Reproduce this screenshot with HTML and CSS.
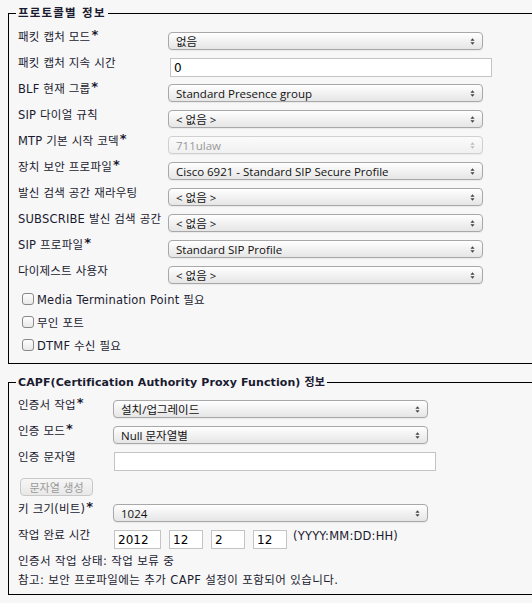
FILE: index.html
```html
<!DOCTYPE html>
<html lang="ko">
<head>
    <meta charset="UTF-8">
    <title>전화 구성</title>
    <link rel="stylesheet" href="styles.css">
</head>
<body>
    <fieldset class="group protocol">
        <legend>프로토콜별 정보</legend>

        <div class="row">
            <label>패킷 캡처 모드<b>*</b></label>
            <div class="select"><span>없음</span><svg class="arrows" viewBox="0 0 6 10"><path d="M3 1L5.5 4H0.5Z M3 9L5.5 6H0.5Z"/></svg></div>
        </div>
        <div class="row">
            <label>패킷 캡처 지속 시간</label>
            <input class="text wide" type="text" value="0">
        </div>
        <div class="row">
            <label>BLF 현재 그룹<b>*</b></label>
            <div class="select"><span>Standard Presence group</span><svg class="arrows" viewBox="0 0 6 10"><path d="M3 1L5.5 4H0.5Z M3 9L5.5 6H0.5Z"/></svg></div>
        </div>
        <div class="row">
            <label>SIP 다이얼 규칙</label>
            <div class="select"><span>&lt; 없음 &gt;</span><svg class="arrows" viewBox="0 0 6 10"><path d="M3 1L5.5 4H0.5Z M3 9L5.5 6H0.5Z"/></svg></div>
        </div>
        <div class="row">
            <label>MTP 기본 시작 코덱<b>*</b></label>
            <div class="select disabled"><span>711ulaw</span><svg class="arrows" viewBox="0 0 6 10"><path d="M3 1L5.5 4H0.5Z M3 9L5.5 6H0.5Z"/></svg></div>
        </div>
        <div class="row">
            <label>장치 보안 프로파일<b>*</b></label>
            <div class="select"><span>Cisco 6921 - Standard SIP Secure Profile</span><svg class="arrows" viewBox="0 0 6 10"><path d="M3 1L5.5 4H0.5Z M3 9L5.5 6H0.5Z"/></svg></div>
        </div>
        <div class="row">
            <label>발신 검색 공간 재라우팅</label>
            <div class="select"><span>&lt; 없음 &gt;</span><svg class="arrows" viewBox="0 0 6 10"><path d="M3 1L5.5 4H0.5Z M3 9L5.5 6H0.5Z"/></svg></div>
        </div>
        <div class="row">
            <label>SUBSCRIBE 발신 검색 공간</label>
            <div class="select"><span>&lt; 없음 &gt;</span><svg class="arrows" viewBox="0 0 6 10"><path d="M3 1L5.5 4H0.5Z M3 9L5.5 6H0.5Z"/></svg></div>
        </div>
        <div class="row">
            <label>SIP 프로파일<b>*</b></label>
            <div class="select"><span>Standard SIP Profile</span><svg class="arrows" viewBox="0 0 6 10"><path d="M3 1L5.5 4H0.5Z M3 9L5.5 6H0.5Z"/></svg></div>
        </div>
        <div class="row">
            <label>다이제스트 사용자</label>
            <div class="select"><span>&lt; 없음 &gt;</span><svg class="arrows" viewBox="0 0 6 10"><path d="M3 1L5.5 4H0.5Z M3 9L5.5 6H0.5Z"/></svg></div>
        </div>

        <div class="check"><span class="box"></span>Media Termination Point 필요</div>
        <div class="check"><span class="box"></span>무인 포트</div>
        <div class="check"><span class="box"></span>DTMF 수신 필요</div>
    </fieldset>

    <fieldset class="group capf">
        <legend>CAPF(Certification Authority Proxy Function) 정보</legend>

        <div class="row">
            <label>인증서 작업<b>*</b></label>
            <div class="select"><span>설치/업그레이드</span><svg class="arrows" viewBox="0 0 6 10"><path d="M3 1L5.5 4H0.5Z M3 9L5.5 6H0.5Z"/></svg></div>
        </div>
        <div class="row">
            <label>인증 모드<b>*</b></label>
            <div class="select"><span>Null 문자열별</span><svg class="arrows" viewBox="0 0 6 10"><path d="M3 1L5.5 4H0.5Z M3 9L5.5 6H0.5Z"/></svg></div>
        </div>
        <div class="row">
            <label>인증 문자열</label>
            <input class="text wide" type="text" value="">
        </div>
        <div class="btn-row">
            <button class="btn" disabled>문자열 생성</button>
        </div>
        <div class="row">
            <label>키 크기(비트)<b>*</b></label>
            <div class="select"><span>1024</span><svg class="arrows" viewBox="0 0 6 10"><path d="M3 1L5.5 4H0.5Z M3 9L5.5 6H0.5Z"/></svg></div>
        </div>
        <div class="row">
            <label>작업 완료 시간</label>
            <div class="date">
                <input class="text year" type="text" value="2012">
                <input class="text part" type="text" value="12">
                <input class="text part" type="text" value="2">
                <input class="text part" type="text" value="12">
                <span class="hint">(YYYY:MM:DD:HH)</span>
            </div>
        </div>
        <p class="note">인증서 작업 상태: 작업 보류 중</p>
        <p class="note">참고: 보안 프로파일에는 추가 CAPF 설정이 포함되어 있습니다.</p>
    </fieldset>
</body>
</html>
```

FILE: styles.css
```css
* {
    margin: 0;
    padding: 0;
    box-sizing: border-box;
}

body {
    background: #f7f7f7;
    color: #1a1a30;
    font-family: "DejaVu Sans", Verdana, "Noto Sans CJK KR", sans-serif;
    font-size: 11.5px;
    letter-spacing: 0.2px;
    overflow: hidden;
    padding-top: 6px;
}

.group {
    width: 560px;
    margin-left: 8px;
    border: 1px solid #000;
    padding: 6px 0 7px 9px;
}

.group legend {
    font-weight: bold;
    font-size: 11px;
    line-height: 15px;
    letter-spacing: 0.1px;
    padding: 0 2px;
    margin-left: -2px;
}

.protocol legend {
    font-size: 11.5px;
    letter-spacing: 1.2px;
}

.capf {
    margin-top: 11px;
    padding-top: 5px;
    padding-bottom: 5px;
}

.row {
    display: grid;
    grid-template-columns: 150px auto;
    justify-content: start;
    height: 26px;
}

.capf .row {
    grid-template-columns: 95px auto;
}

.row label {
    padding-top: 3px;
    line-height: 14px;
    white-space: nowrap;
}

.row label b {
    font-weight: bold;
    font-size: 13px;
    position: relative;
    top: -2px;
    margin-left: 1px;
}

.select {
    margin-top: 5px;
    width: 315px;
    height: 18px;
    border: 1px solid #a8a8a8;
    border-radius: 4px;
    background: linear-gradient(#ffffff, #f3f3f3 45%, #e6e6e6);
    display: flex;
    align-items: center;
    justify-content: space-between;
    padding: 0 7px 0 7px;
    font-family: "Open Sans", "DejaVu Sans", "Noto Sans CJK KR", sans-serif;
    font-size: 11.5px;
    letter-spacing: 0;
    color: #111;
    box-shadow: 0 1px 1px rgba(0, 0, 0, 0.06);
}

.select.disabled {
    color: #999;
    border-color: #d0d0d0;
    background: linear-gradient(#fbfbfb, #f0f0f0);
}

.select.disabled .arrows {
    fill: #bbb;
}

.arrows {
    width: 5px;
    height: 9px;
    fill: #444;
}

.text {
    margin-top: 5px;
    height: 19px;
    border: 1px solid #c4c4c4;
    background: #fff;
    font-family: "DejaVu Sans", "Noto Sans CJK KR", sans-serif;
    font-size: 12px;
    color: #000;
    padding: 1px 3px 0;
    outline: none;
}

.wide {
    width: 322px;
    margin-left: 2px;
}

.capf .wide {
    margin-left: 1px;
}

.check {
    display: flex;
    align-items: center;
    height: 23px;
    padding-left: 4px;
}

.box {
    width: 12px;
    height: 12px;
    border: 1px solid #888;
    border-radius: 3px;
    background: linear-gradient(#fdfdfd, #e9e9e9);
    margin-right: 3px;
}

.btn-row {
    height: 26px;
    padding-left: 2px;
}

.btn {
    margin-top: 5px;
    width: 73px;
    height: 18px;
    border: 1px solid #c8c8c8;
    border-radius: 4px;
    background: linear-gradient(#f6f6f6, #e8e8e8);
    color: #9a9a9a;
    font-family: "DejaVu Sans", "Noto Sans CJK KR", sans-serif;
    font-size: 11px;
}

.date {
    display: flex;
    align-items: flex-start;
    gap: 8px;
}

.date .year {
    width: 47px;
    margin-left: 1px;
}

.date .part {
    width: 34px;
}

.hint {
    padding-top: 4px;
    margin-left: -2px;
    line-height: 14px;
}

.note {
    line-height: 18px;
    padding-top: 1px;
    letter-spacing: 0.4px;
}
```
